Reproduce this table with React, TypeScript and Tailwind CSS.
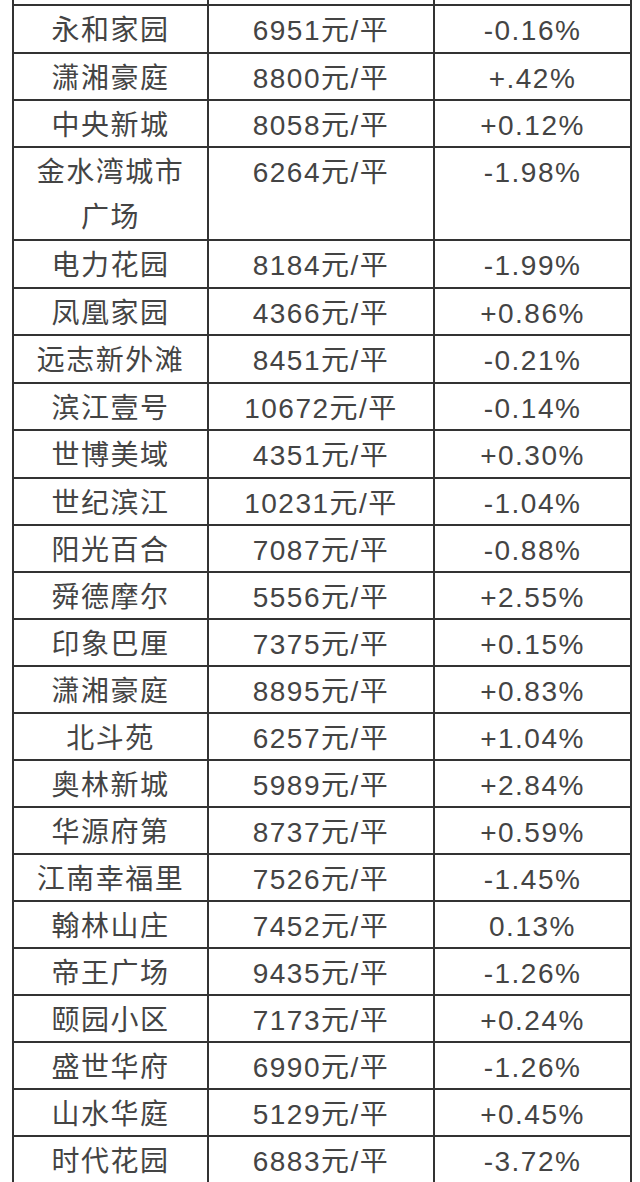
const rows: [string, string, string, number][] = [
  ["永和家园", "6951元/平", "-0.16%", 48],
  ["潇湘豪庭", "8800元/平", "+.42%", 47],
  ["中央新城", "8058元/平", "+0.12%", 47],
  ["金水湾城市广场", "6264元/平", "-1.98%", 93],
  ["电力花园", "8184元/平", "-1.99%", 48],
  ["凤凰家园", "4366元/平", "+0.86%", 47],
  ["远志新外滩", "8451元/平", "-0.21%", 48],
  ["滨江壹号", "10672元/平", "-0.14%", 47],
  ["世博美域", "4351元/平", "+0.30%", 48],
  ["世纪滨江", "10231元/平", "-1.04%", 47],
  ["阳光百合", "7087元/平", "-0.88%", 47],
  ["舜德摩尔", "5556元/平", "+2.55%", 47],
  ["印象巴厘", "7375元/平", "+0.15%", 47],
  ["潇湘豪庭", "8895元/平", "+0.83%", 47],
  ["北斗苑", "6257元/平", "+1.04%", 47],
  ["奥林新城", "5989元/平", "+2.84%", 47],
  ["华源府第", "8737元/平", "+0.59%", 47],
  ["江南幸福里", "7526元/平", "-1.45%", 47],
  ["翰林山庄", "7452元/平", "0.13%", 47],
  ["帝王广场", "9435元/平", "-1.26%", 47],
  ["颐园小区", "7173元/平", "+0.24%", 47],
  ["盛世华府", "6990元/平", "-1.26%", 47],
  ["山水华庭", "5129元/平", "+0.45%", 47],
  ["时代花园", "6883元/平", "-3.72%", 60],
];

export default function App() {
  return (
    <div
      className="h-[1182px] w-[640px] overflow-hidden bg-white text-[28px] leading-[45px] tracking-[1.5px] text-[#444]"
      style={{ fontFamily: '"Liberation Sans", "Noto Sans CJK SC", sans-serif' }}
    >
      <div className="ml-[12px] w-[620px] border-x-2 border-[#333]">
        {/* cut-off previous row */}
        <div className="flex h-[6px] border-b-2 border-[#333]">
          <div className="w-[195px] border-r-2 border-[#333]" />
          <div className="w-[226px] border-r-2 border-[#333]" />
          <div className="flex-1" />
        </div>
        {rows.map(([name, price, change, h], i) => (
          <div
            key={i}
            className="flex border-b-2 border-[#333]"
            style={{ height: h }}
          >
            <div className="w-[195px] border-r-2 border-[#333] px-[16px] pt-[2px] text-center">
              {name}
            </div>
            <div className="w-[226px] border-r-2 border-[#333] pt-[2px] text-center">
              {price}
            </div>
            <div className="flex-1 pt-[2px] text-center">{change}</div>
          </div>
        ))}
      </div>
    </div>
  );
}
